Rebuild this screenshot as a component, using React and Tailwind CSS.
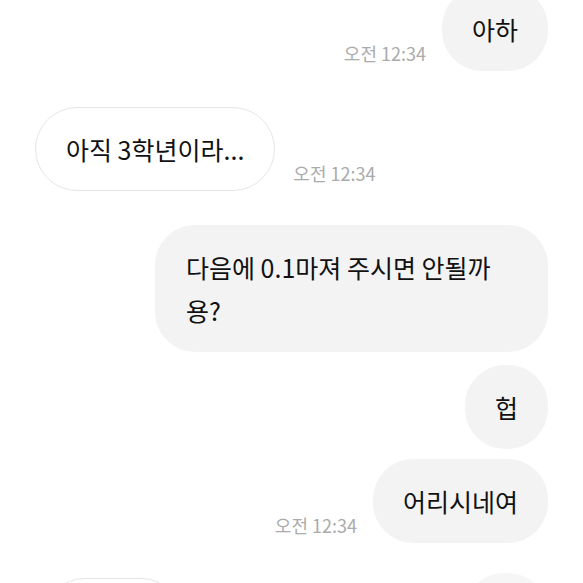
import React from 'react';

const font = { fontFamily: '"Noto Sans CJK KR", "Noto Sans", sans-serif' };

const Time = () => (
  <span className="mb-[8px] text-[18px] leading-[20px] text-[#ababab] whitespace-nowrap">오전 12:34</span>
);

const Sent = ({ children, time, className = '', bubble = '' }) => (
  <div className={`flex items-end justify-end gap-[16px] ${className}`}>
    {time && <Time />}
    <div className={`max-w-[393px] rounded-[40px] bg-[#f3f3f3] px-[30px] py-[20.5px] text-[25px] leading-[43px] text-[#111] ${bubble}`}>
      {children}
    </div>
  </div>
);

const Received = ({ children, time, className = '' }) => (
  <div className={`flex items-end justify-start gap-[18px] ${className}`}>
    <div className="max-w-[393px] rounded-[42px] border border-[#e6e6e6] bg-white px-[30px] py-[19.5px] text-[25px] leading-[43px] text-[#111]">
      {children}
    </div>
    {time && <Time />}
  </div>
);

export default function App() {
  return (
    <div className="h-[583px] w-[583px] overflow-hidden bg-white" style={font}>
      <div className="-mt-[13px] flex flex-col px-[35px]">
        <Sent time>아하</Sent>
        <Received time className="mt-[36px]">아직 3학년이라...</Received>
        <Sent className="mt-[34px]" bubble="w-[393px] px-[31px]">다음에 0.1마져 주시면 안될까 용?</Sent>
        <Sent className="mt-[13px]">헙</Sent>
        <Sent time className="mt-[10px]">어리시네여</Sent>
        <div className="mt-[30px] flex items-start justify-between">
          <div className="ml-[8px] mt-[5px] h-[84px] w-[140px] rounded-[42px] border border-[#e6e6e6] bg-white"></div>
          <div className="h-[84px] w-[84px] rounded-[40px] bg-[#f6f6f6]"></div>
        </div>
      </div>
    </div>
  );
}
